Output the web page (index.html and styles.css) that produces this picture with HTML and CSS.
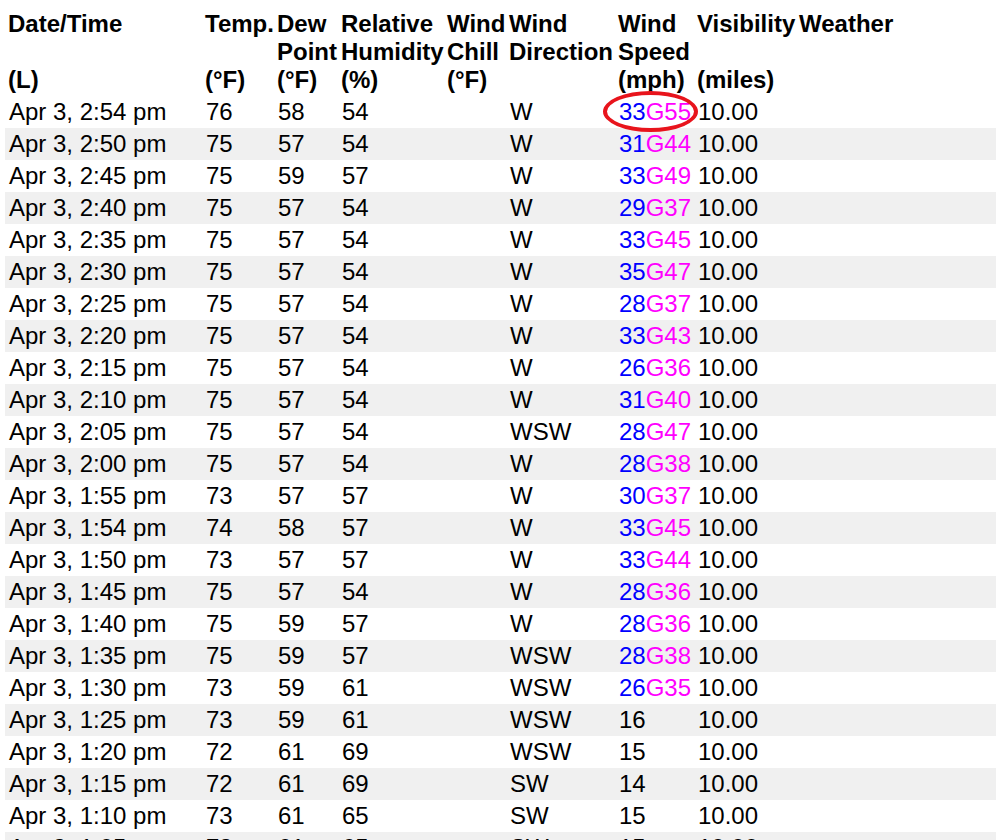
FILE: index.html
```html
<!DOCTYPE html>
<html>
<head>
<meta charset="utf-8">
<link rel="stylesheet" href="styles.css">
</head>
<body>
<table class="obs">
<thead>
<tr>
<th class="c1">Date/Time<br><br>(L)</th>
<th class="c2">Temp.<br><br>(°F)</th>
<th class="c3">Dew<br>Point<br>(°F)</th>
<th class="c4">Relative<br>Humidity<br>(%)</th>
<th class="c5">Wind<br>Chill<br>(°F)</th>
<th class="c6">Wind<br>Direction<br>&nbsp;</th>
<th class="c7">Wind<br>Speed<br>(mph)</th>
<th class="c8">Visibility<br><br>(miles)</th>
<th class="c9">Weather<br><br>&nbsp;</th>
</tr>
</thead>
<tbody>
<tr><td>Apr 3, 2:54 pm</td><td>76</td><td>58</td><td>54</td><td></td><td>W</td><td class="spd"><span class="circled"><span class="sus">33</span><span class="gust">G55</span></span></td><td>10.00</td><td></td></tr>
<tr><td>Apr 3, 2:50 pm</td><td>75</td><td>57</td><td>54</td><td></td><td>W</td><td class="spd"><span class="sus">31</span><span class="gust">G44</span></td><td>10.00</td><td></td></tr>
<tr><td>Apr 3, 2:45 pm</td><td>75</td><td>59</td><td>57</td><td></td><td>W</td><td class="spd"><span class="sus">33</span><span class="gust">G49</span></td><td>10.00</td><td></td></tr>
<tr><td>Apr 3, 2:40 pm</td><td>75</td><td>57</td><td>54</td><td></td><td>W</td><td class="spd"><span class="sus">29</span><span class="gust">G37</span></td><td>10.00</td><td></td></tr>
<tr><td>Apr 3, 2:35 pm</td><td>75</td><td>57</td><td>54</td><td></td><td>W</td><td class="spd"><span class="sus">33</span><span class="gust">G45</span></td><td>10.00</td><td></td></tr>
<tr><td>Apr 3, 2:30 pm</td><td>75</td><td>57</td><td>54</td><td></td><td>W</td><td class="spd"><span class="sus">35</span><span class="gust">G47</span></td><td>10.00</td><td></td></tr>
<tr><td>Apr 3, 2:25 pm</td><td>75</td><td>57</td><td>54</td><td></td><td>W</td><td class="spd"><span class="sus">28</span><span class="gust">G37</span></td><td>10.00</td><td></td></tr>
<tr><td>Apr 3, 2:20 pm</td><td>75</td><td>57</td><td>54</td><td></td><td>W</td><td class="spd"><span class="sus">33</span><span class="gust">G43</span></td><td>10.00</td><td></td></tr>
<tr><td>Apr 3, 2:15 pm</td><td>75</td><td>57</td><td>54</td><td></td><td>W</td><td class="spd"><span class="sus">26</span><span class="gust">G36</span></td><td>10.00</td><td></td></tr>
<tr><td>Apr 3, 2:10 pm</td><td>75</td><td>57</td><td>54</td><td></td><td>W</td><td class="spd"><span class="sus">31</span><span class="gust">G40</span></td><td>10.00</td><td></td></tr>
<tr><td>Apr 3, 2:05 pm</td><td>75</td><td>57</td><td>54</td><td></td><td>WSW</td><td class="spd"><span class="sus">28</span><span class="gust">G47</span></td><td>10.00</td><td></td></tr>
<tr><td>Apr 3, 2:00 pm</td><td>75</td><td>57</td><td>54</td><td></td><td>W</td><td class="spd"><span class="sus">28</span><span class="gust">G38</span></td><td>10.00</td><td></td></tr>
<tr><td>Apr 3, 1:55 pm</td><td>73</td><td>57</td><td>57</td><td></td><td>W</td><td class="spd"><span class="sus">30</span><span class="gust">G37</span></td><td>10.00</td><td></td></tr>
<tr><td>Apr 3, 1:54 pm</td><td>74</td><td>58</td><td>57</td><td></td><td>W</td><td class="spd"><span class="sus">33</span><span class="gust">G45</span></td><td>10.00</td><td></td></tr>
<tr><td>Apr 3, 1:50 pm</td><td>73</td><td>57</td><td>57</td><td></td><td>W</td><td class="spd"><span class="sus">33</span><span class="gust">G44</span></td><td>10.00</td><td></td></tr>
<tr><td>Apr 3, 1:45 pm</td><td>75</td><td>57</td><td>54</td><td></td><td>W</td><td class="spd"><span class="sus">28</span><span class="gust">G36</span></td><td>10.00</td><td></td></tr>
<tr><td>Apr 3, 1:40 pm</td><td>75</td><td>59</td><td>57</td><td></td><td>W</td><td class="spd"><span class="sus">28</span><span class="gust">G36</span></td><td>10.00</td><td></td></tr>
<tr><td>Apr 3, 1:35 pm</td><td>75</td><td>59</td><td>57</td><td></td><td>WSW</td><td class="spd"><span class="sus">28</span><span class="gust">G38</span></td><td>10.00</td><td></td></tr>
<tr><td>Apr 3, 1:30 pm</td><td>73</td><td>59</td><td>61</td><td></td><td>WSW</td><td class="spd"><span class="sus">26</span><span class="gust">G35</span></td><td>10.00</td><td></td></tr>
<tr><td>Apr 3, 1:25 pm</td><td>73</td><td>59</td><td>61</td><td></td><td>WSW</td><td>16</td><td>10.00</td><td></td></tr>
<tr><td>Apr 3, 1:20 pm</td><td>72</td><td>61</td><td>69</td><td></td><td>WSW</td><td>15</td><td>10.00</td><td></td></tr>
<tr><td>Apr 3, 1:15 pm</td><td>72</td><td>61</td><td>69</td><td></td><td>SW</td><td>14</td><td>10.00</td><td></td></tr>
<tr><td>Apr 3, 1:10 pm</td><td>73</td><td>61</td><td>65</td><td></td><td>SW</td><td>15</td><td>10.00</td><td></td></tr>
<tr><td>Apr 3, 1:05 pm</td><td>73</td><td>61</td><td>65</td><td></td><td>SW</td><td>15</td><td>10.00</td><td></td></tr>
</tbody>
</table>
</body>
</html>
```

FILE: styles.css
```css
html, body {
  margin: 0;
  padding: 0;
  background: #ffffff;
}
body {
  font-family: "Liberation Sans", Arial, sans-serif;
  font-size: 24px;
  color: #000000;
}
.obs {
  margin: 8px 0 0 5px;
  width: 1000px;
  border-collapse: collapse;
  table-layout: fixed;
}
.obs th {
  font-weight: bold;
  text-align: left;
  vertical-align: top;
  line-height: 28px;
  padding: 2px 0 2px 3px;
  white-space: nowrap;
}
.obs td {
  line-height: 28px;
  padding: 2px 0 2px 4px;
  white-space: nowrap;
  height: 28px;
}
.obs tbody tr:nth-child(even) {
  background: #f0f0f0;
}
.c1 { width: 194px; }
.c2 { width: 69px; }
.c3 { width: 61px; }
.c4 { width: 103px; }
.c5 { width: 59px; }
.c6 { width: 106px; }
.c7 { width: 76px; }
.c8 { width: 99px; }
.c9 { width: auto; }
.spd { position: relative; }
.sus { color: #0000ff; }
.gust { color: #ff00ff; }
.circled { position: relative; }
.circled::after {
  content: "";
  position: absolute;
  left: -16px;
  right: -7px;
  top: -7px;
  bottom: -7px;
  border: 4px solid #e8141c;
  border-radius: 50%;
}
```
